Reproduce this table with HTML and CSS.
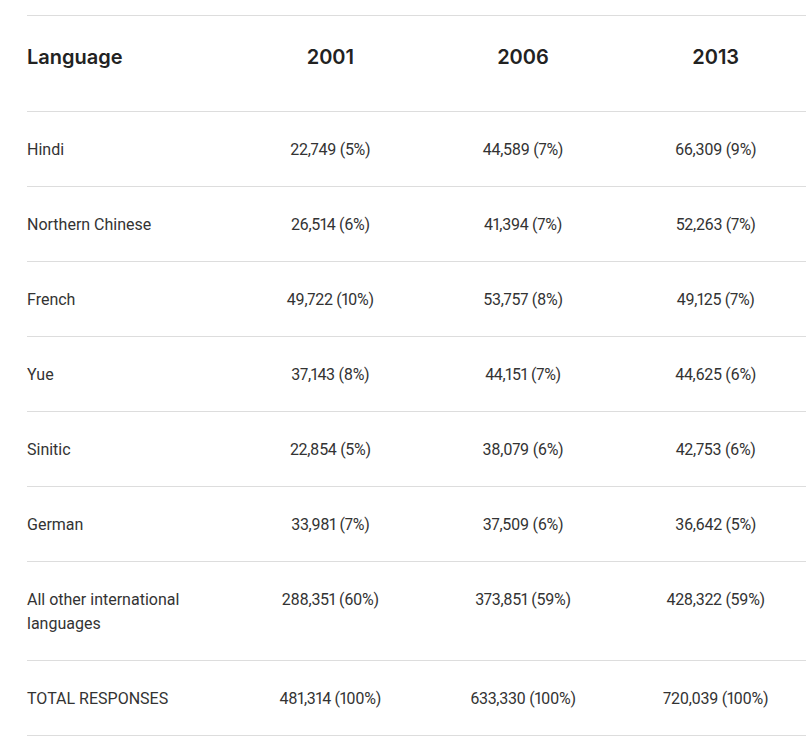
FILE: index.html
```html
<!DOCTYPE html>
<html lang="en">
<head>
<meta charset="utf-8">
<title>Languages</title>
<link rel="stylesheet" href="styles.css">
</head>
<body>
<div class="wrap">
<table class="data">
  <colgroup>
    <col class="c-lang">
    <col class="c-year">
    <col class="c-year">
    <col class="c-year">
  </colgroup>
  <thead>
    <tr><th class="lang">Language</th><th>2001</th><th>2006</th><th>2013</th></tr>
  </thead>
  <tbody>
    <tr><td class="lang">Hindi</td><td>22,749 (5%)</td><td>44,589 (7%)</td><td>66,309 (9%)</td></tr>
    <tr><td class="lang">Northern Chinese</td><td>26,514 (6%)</td><td>41,394 (7%)</td><td>52,263 (7%)</td></tr>
    <tr><td class="lang">French</td><td>49,722 (10%)</td><td>53,757 (8%)</td><td>49,125 (7%)</td></tr>
    <tr><td class="lang">Yue</td><td>37,143 (8%)</td><td>44,151 (7%)</td><td>44,625 (6%)</td></tr>
    <tr><td class="lang">Sinitic</td><td>22,854 (5%)</td><td>38,079 (6%)</td><td>42,753 (6%)</td></tr>
    <tr><td class="lang">German</td><td>33,981 (7%)</td><td>37,509 (6%)</td><td>36,642 (5%)</td></tr>
    <tr><td class="lang">All other international languages</td><td>288,351 (60%)</td><td>373,851 (59%)</td><td>428,322 (59%)</td></tr>
    <tr><td class="lang">TOTAL RESPONSES</td><td>481,314 (100%)</td><td>633,330 (100%)</td><td>720,039 (100%)</td></tr>
  </tbody>
</table>
</div>
</body>
</html>
```
FILE: styles.css
```css
html, body {
  margin: 0;
  padding: 0;
  background: #ffffff;
}
body {
  font-family: Roboto, "Liberation Sans", sans-serif;
  color: #333333;
}
.wrap {
  padding: 15px 0 0 27px;
  overflow: hidden;
}
.data {
  width: 785px;
  border-collapse: collapse;
  table-layout: fixed;
}
.c-lang { width: 207px; }
.c-year { width: 192.67px; }
.data th {
  font-family: Inter, "Liberation Sans", sans-serif;
  font-size: 20px;
  font-weight: 600;
  color: #222222;
  line-height: 30px;
  padding: 26px 0 39px;
  text-align: center;
  border-top: 1px solid #dddddd;
  border-bottom: 1px solid #dddddd;
}
.data td {
  font-size: 16px;
  line-height: 24px;
  padding: 26px 0 24px;
  text-align: center;
  vertical-align: top;
  letter-spacing: -0.3px;
  font-variant-numeric: proportional-nums;
  border-bottom: 1px solid #dddddd;
}
.data .lang {
  text-align: left;
  letter-spacing: 0;
  padding-right: 20px;
}
```
